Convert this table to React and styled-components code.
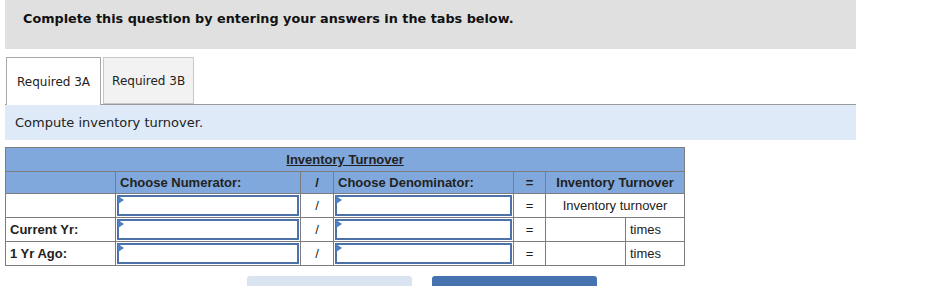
import React from 'react';
import styled, { createGlobalStyle } from 'styled-components';

const GlobalStyle = createGlobalStyle`
  body {
    margin: 0;
    background: #fff;
    font-family: "DejaVu Sans", Verdana, sans-serif;
  }
`;

const Page = styled.div`
  padding: 0 74px 0 5px;
  width: 851px;
`;

const Banner = styled.div`
  background: #e0e0e0;
  height: 49px;
  padding: 11px 0 0 18px;
  box-sizing: border-box;
  font-size: 12.8px;
  font-weight: bold;
  color: #111;
`;

const TabBar = styled.div`
  display: flex;
  align-items: flex-end;
  gap: 2px;
  margin-top: 7px;
  padding-left: 1px;
  border-bottom: 1px solid #9a9a9a;
  height: 48px;
`;

const Tab = styled.div`
  height: ${p => (p.$active ? '48px' : '47px')};
  margin-bottom: ${p => (p.$active ? '-1px' : '0')};
  box-sizing: border-box;
  padding: 0 ${p => (p.$active ? '10px' : '8px')};
  display: flex;
  align-items: center;
  font-size: 12px;
  color: #222;
  background: ${p => (p.$active ? '#fff' : '#f2f2f2')};
  border: 1px solid ${p => (p.$active ? '#a8a8a8' : '#c8c8c8')};
  border-bottom: ${p => (p.$active ? 'none' : '1px solid #c8c8c8')};
`;

const Instruction = styled.div`
  background: #deeaf7;
  height: 35px;
  display: flex;
  align-items: center;
  padding-left: 10px;
  font-size: 13px;
  color: #222;
`;

const Grid = styled.table`
  margin-top: 7px;
  border-collapse: collapse;
  table-layout: fixed;
  width: 679px;
  font-family: "Liberation Sans", Arial, sans-serif;
  font-size: 13px;
  color: #222;
  border: 1px solid #7c7c7c;
`;

const Cell = styled.td`
  border: 1px solid #7c7c7c;
  height: ${p => (p.$tall ? '23px' : '21px')};
  padding: ${p => (p.$input ? '1px' : '0 4px')};
  background: ${p => (p.$head ? '#80a8dd' : '#fff')};
  font-weight: ${p => (p.$bold ? 'bold' : 'normal')};
  text-align: ${p => p.$align || 'left'};
  white-space: nowrap;
  overflow: hidden;
`;

const Title = styled.span`
  font-weight: bold;
  text-decoration: underline;
`;

const AnswerBox = styled.div`
  position: relative;
  height: 21px;
  box-sizing: border-box;
  border: 2px solid #4c72aa;
  background: #fff;

  &::before {
    content: '';
    position: absolute;
    top: -1px;
    left: -1px;
    border-top: 4px solid transparent;
    border-bottom: 4px solid transparent;
    border-left: 6px solid #4c7fc4;
  }
`;

const Footer = styled.div`
  display: flex;
  gap: 20px;
  margin: 10px 0 0 242px;
`;

const NavButton = styled.div`
  width: 165px;
  height: 12px;
  border-radius: 3px 3px 0 0;
  background: ${p => (p.$primary ? '#4672b0' : '#d9e4f0')};
`;

const rows = [
  { label: '', result: 'Inventory turnover' },
  { label: 'Current Yr:', unit: 'times' },
  { label: '1 Yr Ago:', unit: 'times' },
];

export default function App() {
  return (
    <Page>
      <GlobalStyle />
      <Banner>Complete this question by entering your answers in the tabs below.</Banner>
      <TabBar>
        <Tab $active>Required 3A</Tab>
        <Tab>Required 3B</Tab>
      </TabBar>
      <Instruction>Compute inventory turnover.</Instruction>
      <Grid>
        <colgroup>
          <col style={{ width: 110 }} />
          <col style={{ width: 185 }} />
          <col style={{ width: 33 }} />
          <col style={{ width: 180 }} />
          <col style={{ width: 32 }} />
          <col style={{ width: 80 }} />
          <col style={{ width: 59 }} />
        </colgroup>
        <tbody>
          <tr>
            <Cell $head $tall colSpan={7} $align="center">
              <Title>Inventory Turnover</Title>
            </Cell>
          </tr>
          <tr>
            <Cell $head />
            <Cell $head $bold>Choose Numerator:</Cell>
            <Cell $head $bold $align="center">/</Cell>
            <Cell $head $bold>Choose Denominator:</Cell>
            <Cell $head $bold $align="center">=</Cell>
            <Cell $head $bold colSpan={2} $align="center">Inventory Turnover</Cell>
          </tr>
          {rows.map((r, i) => (
            <tr key={i}>
              <Cell $bold>{r.label}</Cell>
              <Cell $input><AnswerBox /></Cell>
              <Cell $align="center">/</Cell>
              <Cell $input><AnswerBox /></Cell>
              <Cell $align="center">=</Cell>
              {r.result ? (
                <Cell colSpan={2} $align="center">{r.result}</Cell>
              ) : (
                <>
                  <Cell />
                  <Cell>{r.unit}</Cell>
                </>
              )}
            </tr>
          ))}
        </tbody>
      </Grid>
      <Footer>
        <NavButton />
        <NavButton $primary />
      </Footer>
    </Page>
  );
}
